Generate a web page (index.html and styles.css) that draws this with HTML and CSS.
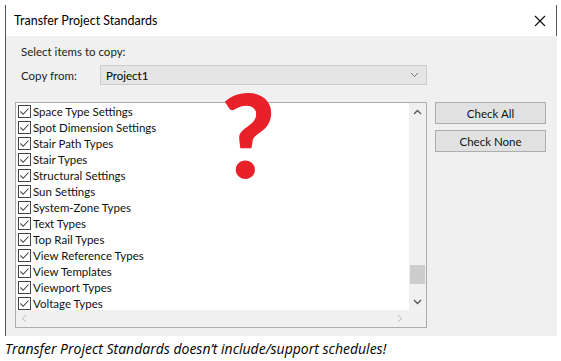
FILE: index.html
```html
<!DOCTYPE html>
<html lang="en">
<head>
    <meta charset="UTF-8">
    <title>Transfer Project Standards</title>
    <link rel="stylesheet" href="styles.css">
</head>
<body>

    <div class="window">
        <div class="titlebar">
            <span class="title">Transfer Project Standards</span>
            <svg class="close" width="12" height="12" viewBox="0 0 12 12">
                <path d="M1 1 L11 11 M11 1 L1 11" stroke="#111" stroke-width="1.2" fill="none"/>
            </svg>
        </div>

        <div class="dialog">
            <p class="label">Select items to copy:</p>

            <div class="copy-row">
                <span class="label">Copy from:</span>
                <div class="select">
                    <span>Project1</span>
                    <svg width="9" height="6" viewBox="0 0 9 6">
                        <path d="M1 1 L4.5 4.5 L8 1" stroke="#777" stroke-width="1" fill="none"/>
                    </svg>
                </div>
            </div>

            <div class="main">
                <div class="listbox">
                    <div class="list-inner">
                        <ul class="items">
                            <li><span class="box"></span>Space Type Settings</li>
                            <li><span class="box"></span>Spot Dimension Settings</li>
                            <li><span class="box"></span>Stair Path Types</li>
                            <li><span class="box"></span>Stair Types</li>
                            <li><span class="box"></span>Structural Settings</li>
                            <li><span class="box"></span>Sun Settings</li>
                            <li><span class="box"></span>System-Zone Types</li>
                            <li><span class="box"></span>Text Types</li>
                            <li><span class="box"></span>Top Rail Types</li>
                            <li><span class="box"></span>View Reference Types</li>
                            <li><span class="box"></span>View Templates</li>
                            <li><span class="box"></span>Viewport Types</li>
                            <li><span class="box"></span>Voltage Types</li>
                        </ul>
                        <div class="vscroll">
                            <svg width="9" height="6" viewBox="0 0 9 6"><path d="M1 5 L4.5 1.5 L8 5" stroke="#555" stroke-width="1.3" fill="none"/></svg>
                            <div class="thumb"></div>
                            <svg width="9" height="6" viewBox="0 0 9 6"><path d="M1 1 L4.5 4.5 L8 1" stroke="#555" stroke-width="1.3" fill="none"/></svg>
                        </div>
                    </div>
                    <div class="hscroll">
                        <svg width="6" height="9" viewBox="0 0 6 9"><path d="M5 1 L1.5 4.5 L5 8" stroke="#bbb" stroke-width="1" fill="none"/></svg>
                        <svg width="6" height="9" viewBox="0 0 6 9"><path d="M1 1 L4.5 4.5 L1 8" stroke="#bbb" stroke-width="1" fill="none"/></svg>
                    </div>
                </div>

                <div class="buttons">
                    <button>Check All</button>
                    <button>Check None</button>
                </div>
            </div>

            <span class="question">?</span>
        </div>
    </div>

    <p class="caption">Transfer Project Standards doesn’t include/support schedules!</p>

</body>
</html>
```

FILE: styles.css
```css
body {
    margin: 0;
    background: #fff;
    font-family: Lato, 'Open Sans', sans-serif;
    font-size: 11.5px;
    color: #000;
}

.window {
    margin: 5px 0 0 5px;
    width: 551px;
    border-left: 1px solid #555;
}

.titlebar {
    height: 31px;
    display: flex;
    align-items: center;
    justify-content: space-between;
    padding: 0 8px 0 8px;
    border-right: 1px solid #555;
    background: #fff;
}

.title {
    font-size: 12.5px;
    margin-top: -1px;
}

.close {
    margin-right: 2px;
}

.dialog {
    position: relative;
    background: #f0f0f0;
    height: 300px;
    padding: 9px 0 0 9px;
    box-sizing: border-box;
}

.label {
    margin: 0 0 0 6px;
    color: #222;
}

.copy-row {
    display: flex;
    align-items: center;
    margin-top: 7px;
}

.copy-row .label {
    width: 79px;
}

.select {
    width: 327px;
    height: 20px;
    box-sizing: border-box;
    background: #e5e5e5;
    border: 1px solid #ccc;
    display: flex;
    align-items: center;
    justify-content: space-between;
    padding: 0 7px 0 5px;
}

.main {
    display: flex;
    gap: 8px;
    margin-top: 17px;
}

.listbox {
    width: 412px;
    height: 226px;
    box-sizing: border-box;
    border: 1px solid #adadad;
    background: #fff;
    display: flex;
    flex-direction: column;
}

.list-inner {
    display: flex;
    height: 207px;
}

.items {
    list-style: none;
    margin: 0;
    padding: 0 0 0 2px;
    flex: 1;
    overflow: hidden;
}

.items li {
    height: 16px;
    display: flex;
    align-items: center;
    gap: 2px;
    white-space: nowrap;
    color: #111;
}

.box {
    width: 13px;
    height: 13px;
    box-sizing: border-box;
    border: 1px solid #444;
    background: #fff url("data:image/svg+xml,%3Csvg xmlns='http://www.w3.org/2000/svg' width='11' height='11'%3E%3Cpath d='M1.5 5.5 L4.2 8.3 L9.5 2.5' stroke='%23444' stroke-width='1.1' fill='none'/%3E%3C/svg%3E") no-repeat center;
}

.vscroll {
    width: 17px;
    background: #f0f0f0;
    display: flex;
    flex-direction: column;
    align-items: center;
    padding: 6px 0 5px;
    box-sizing: border-box;
}

.thumb {
    width: 15px;
    height: 19px;
    background: #cdcdcd;
    margin: auto 0 15px;
}

.hscroll {
    flex: 1;
    background: #f0f0f0;
    display: flex;
    align-items: center;
    justify-content: space-between;
    padding: 0 23px 0 5px;
}

.buttons {
    display: flex;
    flex-direction: column;
    gap: 6px;
}

.buttons button {
    width: 111px;
    height: 22px;
    background: #e1e1e1;
    border: 1px solid #adadad;
    font-family: inherit;
    font-size: 11.5px;
    color: #111;
    padding: 0;
}

.question {
    position: absolute;
    left: 215px;
    top: 39px;
    font-size: 117px;
    font-weight: 900;
    line-height: 1;
    color: #e8202a;
}

.caption {
    margin: 3px 0 0 5px;
    font-family: 'Open Sans', sans-serif;
    font-style: italic;
    font-size: 14px;
}
```
